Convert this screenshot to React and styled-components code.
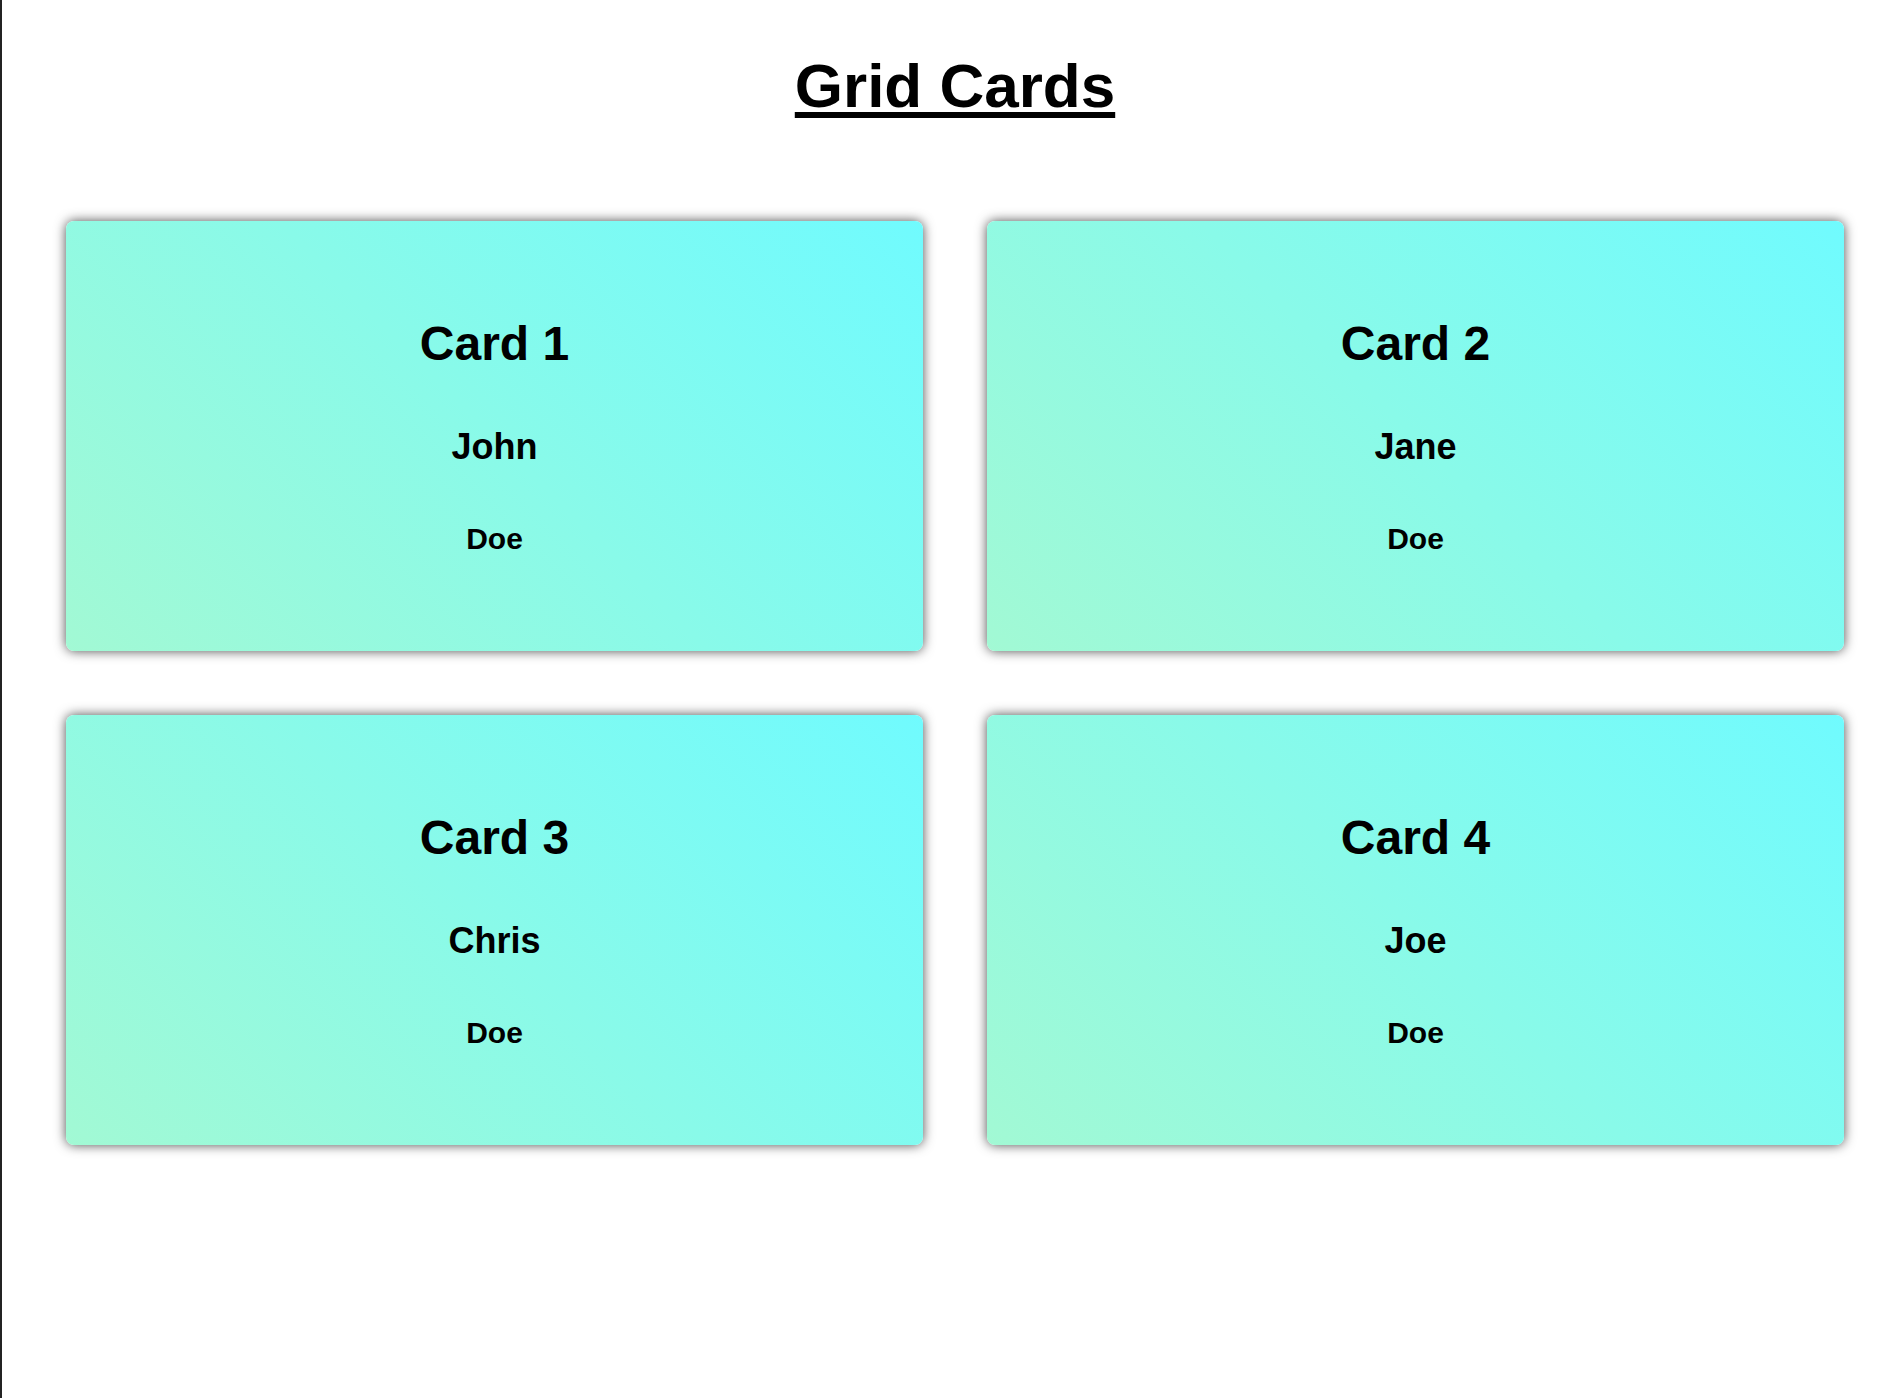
import React from 'react';
import styled, { createGlobalStyle } from 'styled-components';

const GlobalStyle = createGlobalStyle`
    html, body {
        margin: 0;
        padding: 0;
        background: white;
    }
    body {
        font-family: 'Liberation Sans', Arial, sans-serif;
    }
`

const people = [
    { title: 'Card 1', first: 'John', last: 'Doe' },
    { title: 'Card 2', first: 'Jane', last: 'Doe' },
    { title: 'Card 3', first: 'Chris', last: 'Doe' },
    { title: 'Card 4', first: 'Joe', last: 'Doe' },
];

const Card = ({ person }) => {
    return (
        <CardBox>
            <CardTitle>{person.title}</CardTitle>
            <FirstName>{person.first}</FirstName>
            <LastName>{person.last}</LastName>
        </CardBox>
    )
}

const App = () => {
    return (
        <>
            <GlobalStyle />
            <Page>
                <Heading>Grid Cards</Heading>
                <Grid>
                    {people.map((p) => (
                        <Card key={p.title} person={p} />
                    ))}
                </Grid>
            </Page>
        </>
    )
}

export default App;


const Page = styled.div`
    min-height: 100vh;
    box-sizing: border-box;
    border-left: 2px solid #232323;
    padding: 55px 0 0 8px;
    display: flex;
    flex-direction: column;
    align-items: center;
`

const Heading = styled.h1`
    margin: 0;
    font-size: 62px;
    line-height: 1;
    font-weight: 700;
    color: black;
    text-decoration: underline;
    text-decoration-thickness: 6px;
    text-underline-offset: 5px;
`

const Grid = styled.div`
    box-sizing: border-box;
    width: 100%;
    padding: 0 56px;
    margin-top: 104px;
    display: grid;
    grid-template-columns: 1fr 1fr;
    gap: 64px;
`

const CardBox = styled.div`
    height: 430px;
    box-sizing: border-box;
    padding-top: 2px;
    border-radius: 8px;
    background: linear-gradient(45deg, #a2f9d4, #70fbfe);
    box-shadow: 0 0 12px rgba(0, 0, 0, 0.7);
    display: flex;
    flex-direction: column;
    align-items: center;
    justify-content: center;
    color: black;
`

const CardTitle = styled.h2`
    margin: 0;
    font-size: 48px;
    line-height: 1;
    font-weight: 700;
`

const FirstName = styled.p`
    margin: 61px 0 0;
    font-size: 36px;
    line-height: 1;
    font-weight: 700;
`

const LastName = styled.p`
    margin: 59px 0 0;
    font-size: 30px;
    line-height: 1;
    font-weight: 700;
`
